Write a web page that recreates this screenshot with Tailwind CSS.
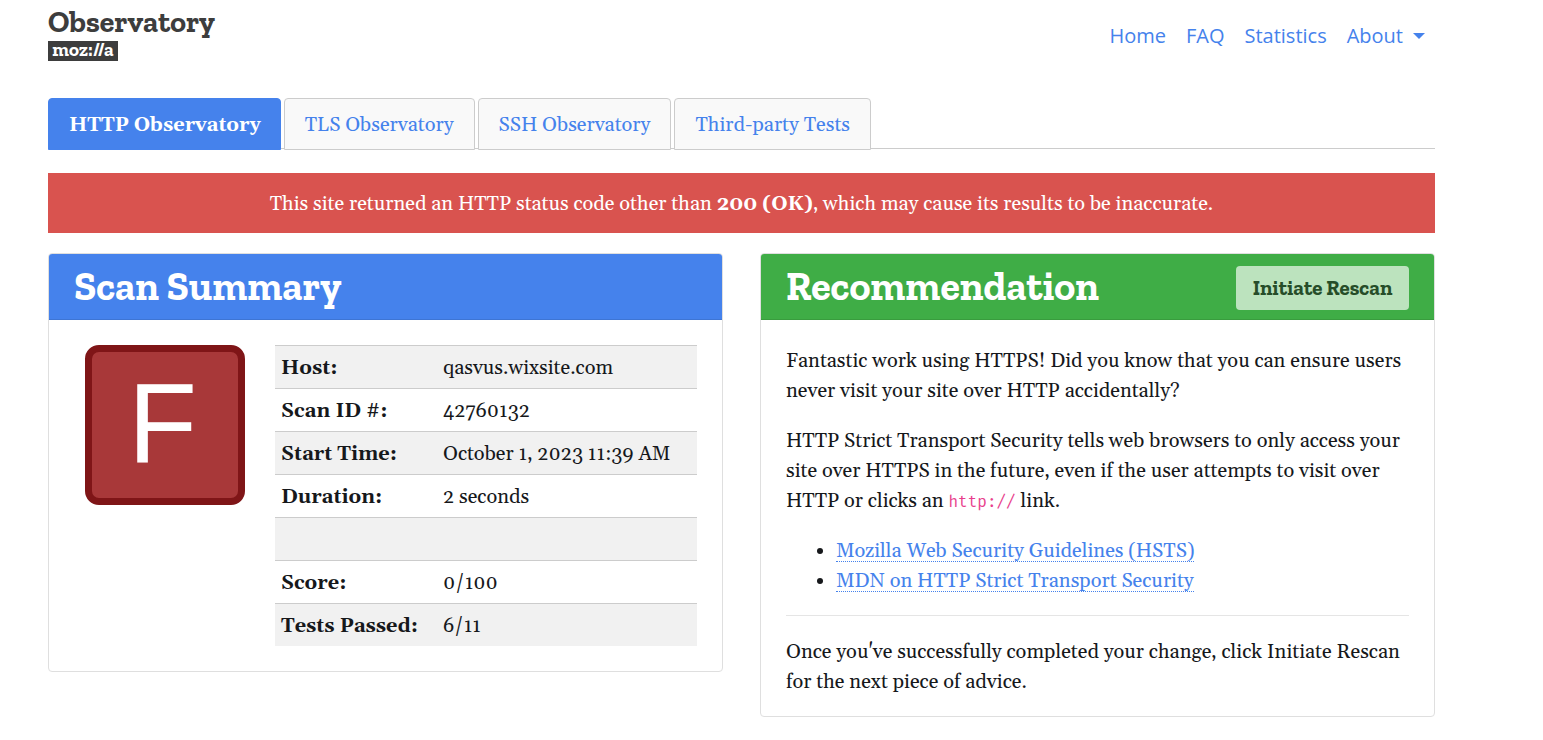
<!DOCTYPE html>
<html lang="en">
<head>
<meta charset="utf-8">
<meta name="viewport" content="width=device-width, initial-scale=1">
<title>Observatory by Mozilla</title>
<script src="https://cdn.jsdelivr.net/npm/@tailwindcss/browser@4"></script>
</head>
<body class="bg-white text-[#16181b] font-[Georgia,Gelasio,'Liberation_Serif',serif] text-[20px] leading-[30px]">
<div class="ml-12 mr-12 xl:mr-[108px] pb-6">
  <header class="flex items-start justify-between pt-2">
    <a href="#" class="block text-[#3d3d3d] font-bold font-['Zilla_Slab','DejaVu_Serif_Condensed','DejaVu_Serif',serif]">
      <span class="block text-[30px] leading-[28px]">Observatory</span>
      <span class="mt-[5px] flex h-5 w-[70px] items-start justify-center bg-[#3d3d3d] text-[19px] leading-[18px] text-white">moz://a</span>
    </a>
    <nav class="flex items-center gap-5 pt-[13px] pr-[10px] font-['Open_Sans',sans-serif] text-[20px] leading-[30px] text-[#4582ec]">
      <a href="#">Home</a>
      <a href="#">FAQ</a>
      <a href="#">Statistics</a>
      <button type="button" class="flex items-center gap-[10px]">About
        <svg class="h-[6px] w-3" viewBox="0 0 12 6" fill="currentColor" aria-hidden="true"><path d="M0 0h12L6 6z"/></svg>
      </button>
    </nav>
  </header>

  <nav class="mt-[37px] flex gap-[3px] border-b border-[#ccc] text-[#4582ec]">
    <a href="#" class="-mb-[2px] rounded-t border border-[#4582ec] bg-[#4582ec] pt-[11px] pr-[19px] pb-[9px] pl-5 font-bold text-white">HTTP Observatory</a>
    <a href="#" class="-mb-[2px] rounded-t border border-[#ccc] bg-[#f9f9f9] px-5 pt-[11px] pb-[9px]">TLS Observatory</a>
    <a href="#" class="-mb-[2px] rounded-t border border-[#ccc] bg-[#f9f9f9] px-5 pt-[11px] pb-[9px]">SSH Observatory</a>
    <a href="#" class="-mb-[2px] rounded-t border border-[#ccc] bg-[#f9f9f9] px-5 pt-[11px] pb-[9px]">Third-party Tests</a>
  </nav>

  <div role="alert" class="mt-6 bg-[#d9534f] pt-4 pb-[14px] text-center text-white">This site returned an HTTP status code other than <strong>200 (OK)</strong>, which may cause its results to be inaccurate.</div>

  <main class="mt-5 grid items-start gap-[37px] lg:grid-cols-2">
    <section class="overflow-hidden rounded border border-[#dfdfdf]">
      <h2 class="flex h-[66px] items-center border-b border-[#3e75d4] bg-[#4582ec] px-[25px] pb-[2px] font-['Zilla_Slab','DejaVu_Serif_Condensed','DejaVu_Serif',serif] text-[40px] leading-[44px] font-bold text-white">Scan Summary</h2>
      <div class="flex items-start gap-[30px] py-[25px] pr-[25px] pl-9">
        <div class="flex size-40 shrink-0 items-center justify-center rounded-[14px] border-[7px] border-[#7f1517] bg-[#a83839] pr-[5px] pb-[2px] font-['Liberation_Sans',sans-serif] text-[113px] leading-none text-white">F</div>
        <table class="w-full border-collapse text-left">
          <tbody>
            <tr class="h-[43px] border-t border-[#ccc] bg-[#f1f1f1]"><th scope="row" class="w-[162px] px-[6px] pt-[7px] pb-[5px]">Host:</th><td class="px-[6px] pt-[7px] pb-[5px]">qasvus.wixsite.com</td></tr>
            <tr class="h-[43px] border-t border-[#ccc]"><th scope="row" class="px-[6px] pt-[7px] pb-[5px]">Scan ID #:</th><td class="px-[6px] pt-[7px] pb-[5px]">42760132</td></tr>
            <tr class="h-[43px] border-t border-[#ccc] bg-[#f1f1f1]"><th scope="row" class="px-[6px] pt-[7px] pb-[5px]">Start Time:</th><td class="px-[6px] pt-[7px] pb-[5px]">October 1, 2023 11:39 AM</td></tr>
            <tr class="h-[43px] border-t border-[#ccc]"><th scope="row" class="px-[6px] pt-[7px] pb-[5px]">Duration:</th><td class="px-[6px] pt-[7px] pb-[5px]">2 seconds</td></tr>
            <tr class="h-[43px] border-t border-[#ccc] bg-[#f1f1f1]"><td></td><td></td></tr>
            <tr class="h-[43px] border-t border-[#ccc]"><th scope="row" class="px-[6px] pt-[7px] pb-[5px]">Score:</th><td class="px-[6px] pt-[7px] pb-[5px]">0/100</td></tr>
            <tr class="h-[42px] border-t border-[#ccc] bg-[#f1f1f1]"><th scope="row" class="px-[6px] pt-[7px] pb-[5px]">Tests Passed:</th><td class="px-[6px] pt-[7px] pb-[5px]">6/11</td></tr>
          </tbody>
        </table>
      </div>
    </section>

    <section class="overflow-hidden rounded border border-[#dfdfdf]">
      <div class="flex h-[66px] items-center justify-between border-b border-[#399c3e] bg-[#3fad46] px-[25px] font-['Zilla_Slab','DejaVu_Serif_Condensed','DejaVu_Serif',serif] font-bold">
        <h2 class="pb-[2px] text-[40px] leading-[44px] text-white">Recommendation</h2>
        <button type="button" class="mt-[3px] h-11 w-[173px] rounded bg-[#bce3be] text-[21px] text-[#264d29]">Initiate Rescan</button>
      </div>
      <div class="px-[25px] pt-[26px] pb-[19px]">
        <p class="mb-5">Fantastic work using HTTPS! Did you know that you can ensure users never visit your site over HTTP accidentally?</p>
        <p class="mb-5">HTTP Strict Transport Security tells web browsers to only access your site over HTTPS in the future, even if the user attempts to visit over HTTP or clicks an <code class="font-['Fira_Mono','Noto_Sans_Mono','DejaVu_Sans_Mono',monospace] text-[16px] leading-none text-[#e83e8c]">http://</code> link.</p>
        <ul class="list-disc pl-[50px]">
          <li><a href="#" class="inline-block border-b border-dotted border-[#4582ec] leading-[20px] text-[#4582ec]">Mozilla Web Security Guidelines (HSTS)</a></li>
          <li><a href="#" class="inline-block border-b border-dotted border-[#4582ec] leading-[20px] text-[#4582ec]">MDN on HTTP Strict Transport Security</a></li>
        </ul>
        <hr class="mt-[19px] mb-[21px] border-t border-[#e5e5e5]">
        <p>Once you've successfully completed your change, click Initiate Rescan for the next piece of advice.</p>
      </div>
    </section>
  </main>
</div>
</body>
</html>
